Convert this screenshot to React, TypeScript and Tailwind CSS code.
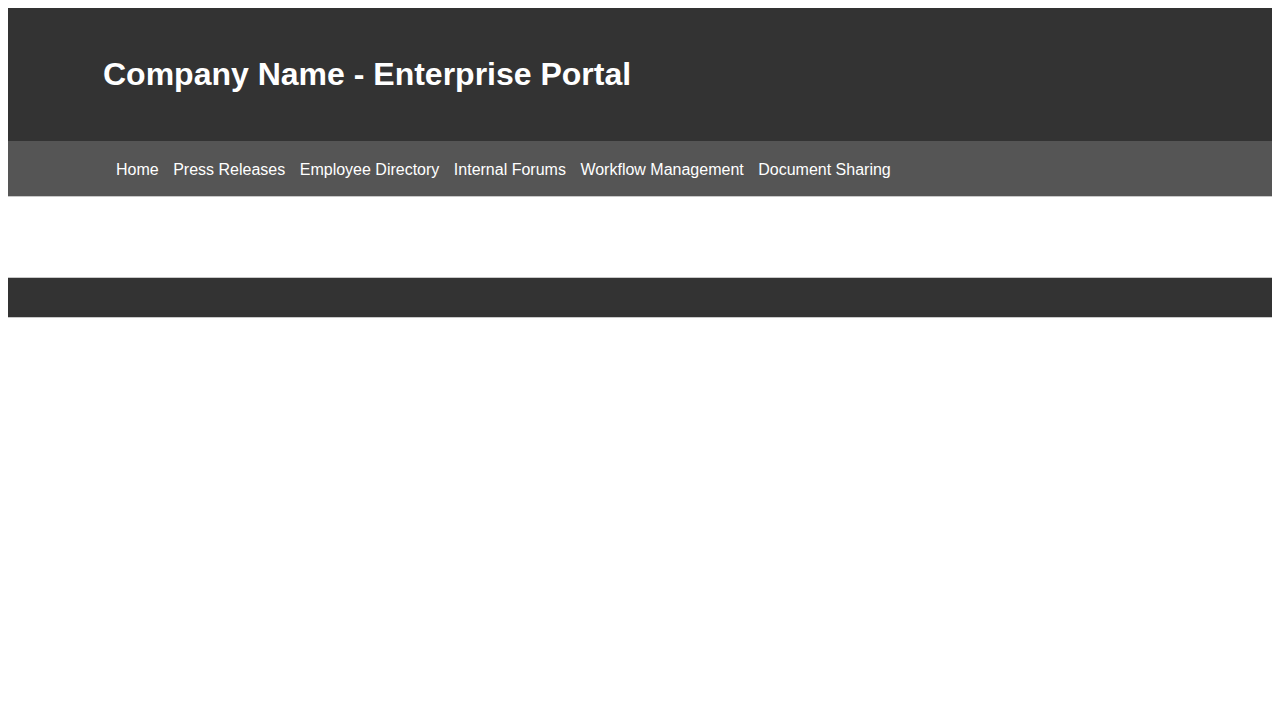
const navItems = [
  "Home",
  "Press Releases",
  "Employee Directory",
  "Internal Forums",
  "Workflow Management",
  "Document Sharing",
]

export default function App() {
  return (
    <div className="min-h-screen bg-white p-2" style={{ fontFamily: '"Liberation Sans", Arial, sans-serif' }}>
      {/* Header */}
      <header className="bg-[#333333] pt-[10px] h-[133px]">
        <div className="ml-[86px] w-[1076px] h-[97px]">
          <h1 className="mt-[22px] h-[53px] pt-[16px] pl-[9px] text-[32px] leading-[37px] font-bold text-white">
            Company Name - Enterprise Portal
          </h1>
        </div>
      </header>

      {/* Navigation */}
      <nav className="bg-[#555555] h-[56px] border-b border-[#c8c8c8]">
        <ul className="flex gap-[14.5px] pl-[108px] pt-[20px] text-[16px] leading-[18px] text-white">
          {navItems.map((item) => (
            <li key={item}>
              <a href="#">{item}</a>
            </li>
          ))}
        </ul>
      </nav>

      {/* Main content */}
      <main className="h-[80px] bg-white" />

      {/* Footer */}
      <footer className="bg-[#333333] h-[41px] border-t border-b border-[#c8c8c8]" />
    </div>
  )
}
